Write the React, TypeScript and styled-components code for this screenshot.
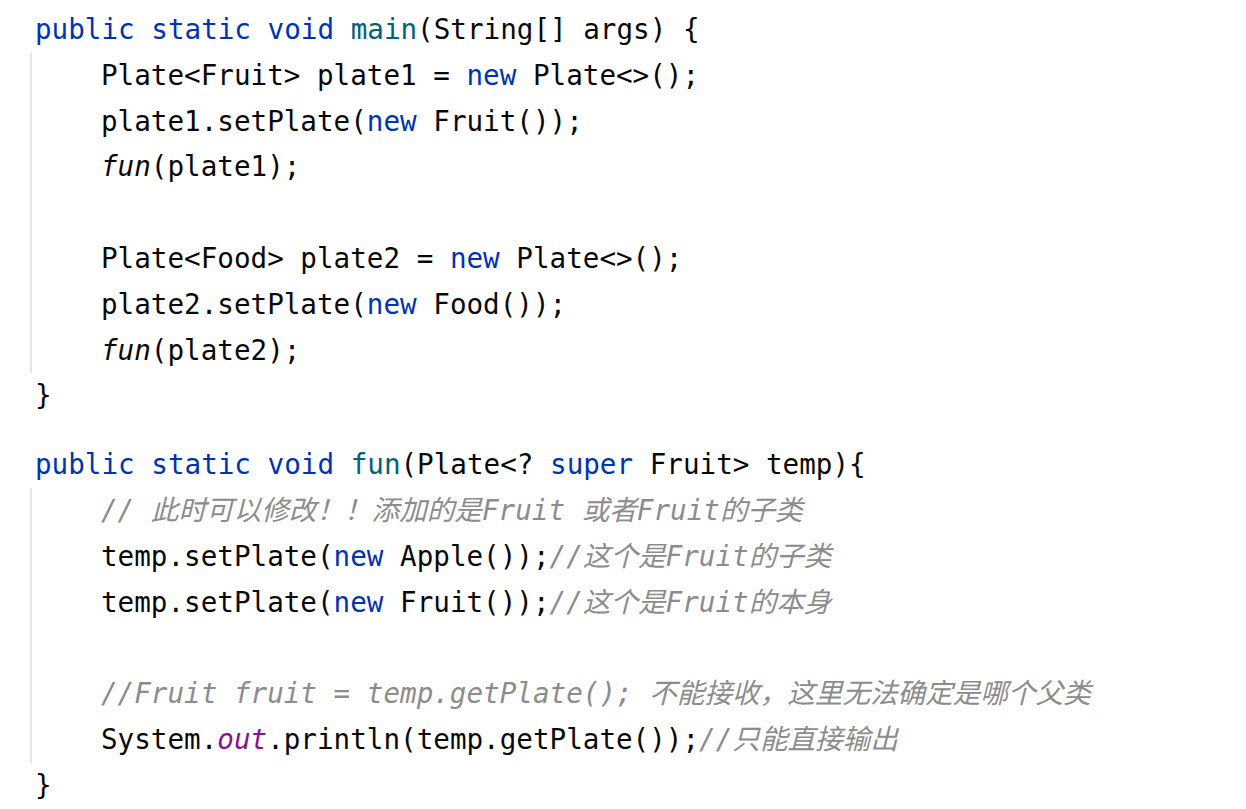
import React from "react";
import styled, { createGlobalStyle } from "styled-components";

const Global = createGlobalStyle`
  html, body { margin: 0; padding: 0; background: #ffffff; }
  body { width: 1246px; height: 809px; overflow: hidden; }
`;

const Editor = styled.div`
  padding: 7px 0 0 30px;
  font-family: "DejaVu Sans Mono", "Noto Sans CJK SC", monospace;
  font-size: 27.6px;
  color: #080808;
  display: flex;
  flex-direction: column;
`;

const Block = styled.div<{ $gapTop?: number }>`
  display: flex;
  flex-direction: column;
  margin-top: ${(p) => p.$gapTop ?? 0}px;
`;

const Line = styled.div`
  height: 45.8px;
  line-height: 45.8px;
  white-space: pre;
  padding-left: 5px;
`;

const Body = styled.div`
  border-left: 2px solid #e6e6e6;
  padding-left: 69px;
  display: flex;
  flex-direction: column;
`;

const BodyLine = styled.div`
  height: 45.8px;
  line-height: 45.8px;
  white-space: pre;
`;

const Kw = styled.span`
  color: #0033b3;
`;
const Decl = styled.span`
  color: #00627a;
`;
const Call = styled.span`
  font-style: italic;
`;
const Field = styled.span`
  color: #871094;
  font-style: italic;
`;
const Comment = styled.span`
  color: #8c8c8c;
  font-style: italic;
`;

export default function App() {
  return (
    <>
      <Global />
      <Editor>
        <Block>
          <Line>
            <Kw>public static void </Kw>
            <Decl>main</Decl>(String[] args) {"{"}
          </Line>
          <Body>
            <BodyLine>
              Plate&lt;Fruit&gt; plate1 = <Kw>new</Kw> Plate&lt;&gt;();
            </BodyLine>
            <BodyLine>
              plate1.setPlate(<Kw>new</Kw> Fruit());
            </BodyLine>
            <BodyLine>
              <Call>fun</Call>(plate1);
            </BodyLine>
            <BodyLine> </BodyLine>
            <BodyLine>
              Plate&lt;Food&gt; plate2 = <Kw>new</Kw> Plate&lt;&gt;();
            </BodyLine>
            <BodyLine>
              plate2.setPlate(<Kw>new</Kw> Food());
            </BodyLine>
            <BodyLine>
              <Call>fun</Call>(plate2);
            </BodyLine>
          </Body>
          <Line>{"}"}</Line>
        </Block>
        <Block $gapTop={23}>
          <Line>
            <Kw>public static void </Kw>
            <Decl>fun</Decl>(Plate&lt;? <Kw>super</Kw> Fruit&gt; temp){"{"}
          </Line>
          <Body>
            <BodyLine>
              <Comment>// 此时可以修改！！添加的是Fruit 或者Fruit的子类</Comment>
            </BodyLine>
            <BodyLine>
              temp.setPlate(<Kw>new</Kw> Apple());<Comment>//这个是Fruit的子类</Comment>
            </BodyLine>
            <BodyLine>
              temp.setPlate(<Kw>new</Kw> Fruit());<Comment>//这个是Fruit的本身</Comment>
            </BodyLine>
            <BodyLine> </BodyLine>
            <BodyLine>
              <Comment>//Fruit fruit = temp.getPlate(); 不能接收，这里无法确定是哪个父类</Comment>
            </BodyLine>
            <BodyLine>
              System.<Field>out</Field>.println(temp.getPlate());<Comment>//只能直接输出</Comment>
            </BodyLine>
          </Body>
          <Line>{"}"}</Line>
        </Block>
      </Editor>
    </>
  );
}
